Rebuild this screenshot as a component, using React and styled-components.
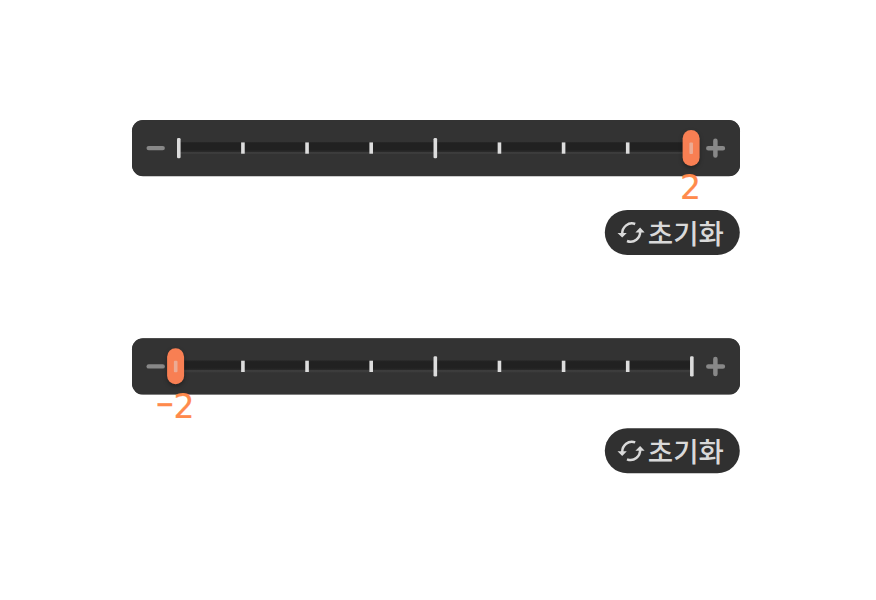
import React from 'react';
import styled, { createGlobalStyle } from 'styled-components';

const GlobalStyle = createGlobalStyle`
  * { box-sizing: border-box; }
  body { margin: 0; background: #fff; overflow: hidden; }
`;

const Page = styled.main`
  width: 876px;
  height: 600px;
  padding: 120px 136px 0 132px;
  display: flex;
  flex-direction: column;
  gap: 83px;
  background: #fff;
  font-family: 'Noto Sans', 'Noto Sans CJK KR', sans-serif;
`;

const Control = styled.section`
  width: 608px;
  height: 135px;
  display: flex;
  flex-direction: column;
  align-items: flex-end;
  justify-content: space-between;
  transform: translateY(${({ $shift }) => $shift}px);
`;

const Panel = styled.div`
  width: 100%;
  height: 56px;
  padding: 0 14px;
  display: flex;
  align-items: center;
  justify-content: space-between;
  border-radius: 11px;
  background: #333;
  box-shadow: 0 0.3px 0 #333;
`;

const StepButton = styled.button`
  width: 20px;
  height: 20px;
  padding: 0;
  border: 0;
  display: flex;
  background: none;
  color: #888;
  svg { display: block; overflow: visible; }
`;

const Track = styled.div`
  position: relative;
  width: 517px;
  height: 20px;
  margin: 0 auto 0 11px;
`;

const Rail = styled.div`
  position: absolute;
  inset: 4px 2px;
  background: linear-gradient(#282828 0, #212121 1.5px, #212121 7.5px, #292929 9.5px, #3d3d3d 10px, #3b3b3b 100%);
`;

const Scale = styled.svg`
  position: absolute;
  inset: 0;
  overflow: visible;
`;

const Thumb = styled.div`
  position: absolute;
  top: -8px;
  left: 0;
  transform: translateX(${({ $end }) => ($end ? 505.6 : -9.9)}px);
  width: 17px;
  height: 36px;
  border-radius: 8.5px;
  background: #f87f53;
  box-shadow: 0 2px 4px rgba(0, 0, 0, 0.35);
  svg { display: block; }
`;

const Value = styled.output`
  position: absolute;
  top: 31px;
  left: 0;
  width: 60px;
  transform: translate(${({ $end }) => ($end ? 483.6 : -31.9)}px, 0.2px);
  display: flex;
  justify-content: center;
  font-family: 'DejaVu Sans', sans-serif;
  font-size: 33px;
  line-height: 38px;
  color: #ff8a4c;
  -webkit-text-stroke: 0.2px #ff8a4c;
`;

const Sign = styled.span`
  width: 18px;
  display: flex;
  justify-content: center;
  transform: translate(-0.1px, -2.6px) scaleX(0.7);
`;

const ResetButton = styled.button`
  width: 135px;
  height: 45px;
  padding: 0 0 0 12px;
  border: 0;
  border-radius: 22.5px;
  display: flex;
  align-items: center;
  gap: 3px;
  background: #303030;
  color: #d9d9d9;
  font: 500 27.6px/40px 'Noto Sans CJK KR', sans-serif;
  white-space: nowrap;
  transform: translateX(-0.2px);
  svg { flex: none; display: block; }
`;

const Label = styled.span`
  display: block;
  transform: translateY(-1.2px);
`;

const Minus = () => (
  <svg width="20" height="20"><rect x="0.5" y="7.9" width="18.4" height="4.4" rx="2.2" fill="#888" /></svg>
);
const Plus = () => (
  <svg width="20" height="20">
    <path d="M9.4 2.8V17.6M2.3 10.3H16.9" stroke="#888" strokeWidth="4.5" strokeLinecap="round" />
  </svg>
);
const Refresh = () => (
  <svg width="28" height="24" viewBox="0 0 28 24" fill="none">
    <path d="M5.4 12.6C5.4 6 11.6.5 18.4 3M23.4 9.6C23.7 17.4 17.1 22.8 10.2 20" stroke="#d9d9d9" strokeWidth="2.5" />
    <path d="M.7 11.9H10L5.4 16.6ZM18.6 11.4H27.9L23.3 6.6Z" fill="#d9d9d9" />
  </svg>
);

const TICKS = Array.from({ length: 9 }, (_, i) => i);

function Ticks() {
  return (
    <Scale width="517" height="20">
      {TICKS.map((i) => {
        const major = i % 4 === 0;
        return (
          <rect
            key={i}
            x={i * 64.13}
            y={major ? 0 : 4.4}
            width="3.6"
            height={major ? 20.3 : 11.3}
            rx={major ? 1.3 : 0}
            fill="#dcdcdc"
          />
        );
      })}
    </Scale>
  );
}

function SliderControl({ value, shift = 0 }) {
  const end = value > 0;
  return (
    <Control $shift={shift}>
      <Panel>
        <StepButton aria-label="감소"><Minus /></StepButton>
        <Track>
          <Rail />
          <Ticks />
          <Thumb $end={end}>
            <svg width="17" height="36"><rect x="6.8" y="12.5" width="3.6" height="11.5" rx="1" fill="#ecab94" /></svg>
          </Thumb>
          <Value $end={end}>{value < 0 && <Sign>−</Sign>}{Math.abs(value)}</Value>
        </Track>
        <StepButton aria-label="증가"><Plus /></StepButton>
      </Panel>
      <ResetButton><Refresh /><Label>초기화</Label></ResetButton>
    </Control>
  );
}

export default function App() {
  return (
    <>
      <GlobalStyle />
      <Page>
        <SliderControl value={2} />
        <SliderControl value={-2} shift={0.3} />
      </Page>
    </>
  );
}
